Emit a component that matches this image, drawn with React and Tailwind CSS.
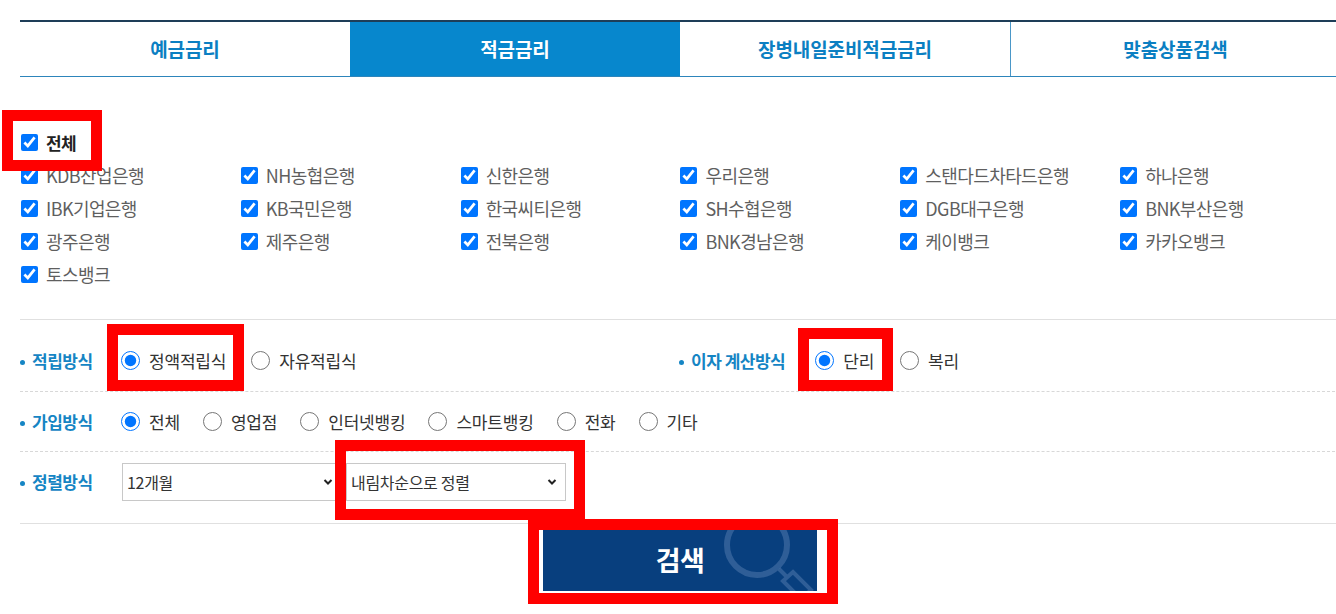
import React from "react";

const banks = [
    "KDB산업은행", "NH농협은행", "신한은행", "우리은행", "스탠다드차타드은행", "하나은행",
    "IBK기업은행", "KB국민은행", "한국씨티은행", "SH수협은행", "DGB대구은행", "BNK부산은행",
    "광주은행", "제주은행", "전북은행", "BNK경남은행", "케이뱅크", "카카오뱅크",
    "토스뱅크",
];

const tabs = ["예금금리", "적금금리", "장병내일준비적금금리", "맞춤상품검색"];

// red annotation frame drawn over the screenshot
function Mark({ className }) {
    return <span className={`pointer-events-none absolute z-10 border-[11px] border-[#ff0000] ${className}`} />;
}

function Label({ children, className = "" }) {
    return (
        <div className={`flex items-center text-[17px] font-bold tracking-[-0.5px] text-[#1585c4] ${className}`}>
            <span className="w-[5px] h-[5px] rounded-full bg-[#1585c4] mr-[7px] mt-[3px]" />
            {children}
        </div>
    );
}

function Radio({ name, label, checked, children }) {
    return (
        <label className="relative flex items-center h-[24px] gap-[9px] text-[17px] tracking-[-0.2px] text-[#333]">
            <input type="radio" name={name} defaultChecked={checked} className="m-0 w-[19px] h-[19px]" />
            {label}
            {children}
        </label>
    );
}

function Select({ value, children }) {
    return (
        <div className="relative w-[220px] h-[38px]">
            <select
                defaultValue={value}
                className="appearance-none w-full h-full border border-[#c8c8c8] bg-white pl-[4px] text-[16px] text-[#333] tracking-[-0.3px] outline-none"
            >
                <option>{value}</option>
            </select>
            <svg className="pointer-events-none absolute right-[9px] top-[15px]" width="10" height="8" viewBox="0 0 10 8">
                <path d="M1.5 2 L5 5.5 L8.5 2" fill="none" stroke="#222" strokeWidth="2" />
            </svg>
            {children}
        </div>
    );
}

export default function App() {
    return (
        <div className="w-full min-h-[614px] bg-white overflow-hidden pl-[20px] font-['Noto_Sans_CJK_KR','Noto_Sans',sans-serif]">
            <div className="w-[1320px]">
                {/* Tabs */}
                <div className="mt-[20px] grid grid-cols-4 h-[57px] border-t-2 border-t-[#1e3e58] border-b border-b-[#2d85bb]">
                    {tabs.map((t, i) => (
                        <div
                            key={t}
                            className={`flex items-center justify-center text-[19px] font-bold tracking-[-0.1px] ${
                                i === 1 ? "bg-[#0787cd] text-white" : "text-[#0b7fc2]"
                            } ${i === 3 ? "border-l border-l-[#4a97c8]" : ""}`}
                        >
                            {t}
                        </div>
                    ))}
                </div>

                {/* Bank checkboxes */}
                <div className="mt-[49px] pl-[1px]">
                    <div className="h-[33px] flex items-center">
                        <label className="relative flex items-center h-[33px] gap-[8px] text-[17px] font-bold tracking-[-0.6px] text-[#222]">
                            <input type="checkbox" defaultChecked className="m-0 w-[17px] h-[17px]" />
                            전체
                            <Mark className="-left-[19px] -right-[26px] -top-[16px] -bottom-[12px]" />
                        </label>
                    </div>
                    <div className="grid grid-cols-6">
                        {banks.map((b) => (
                            <label key={b} className="flex items-center h-[33px] gap-[8px] text-[18px] tracking-[-0.6px] text-[#5f5f5f]">
                                <input type="checkbox" defaultChecked className="m-0 w-[17px] h-[17px]" />
                                {b}
                            </label>
                        ))}
                    </div>
                </div>

                {/* Options */}
                <div className="mt-[28px] border-t border-[#e0e0e0]">
                    <div className="flex items-center h-[72px] pt-[10px] border-b border-dashed border-[#d8d8d8]">
                        <div className="flex items-center w-[659px]">
                            <Label className="w-[101px]">적립방식</Label>
                            <div className="flex items-center gap-[25px]">
                                <Radio name="save" label="정액적립식" checked>
                                    <Mark className="-left-[14px] -right-[18px] -top-[25px] -bottom-[18px]" />
                                </Radio>
                                <Radio name="save" label="자유적립식" />
                            </div>
                        </div>
                        <div className="flex items-center">
                            <Label className="mr-[30px]">이자 계산방식</Label>
                            <div className="flex items-center gap-[26px]">
                                <Radio name="interest" label="단리" checked>
                                    <Mark className="-left-[17px] -right-[19px] -top-[21px] -bottom-[18px]" />
                                </Radio>
                                <Radio name="interest" label="복리" />
                            </div>
                        </div>
                    </div>

                    <div className="flex items-center h-[60px] border-b border-dashed border-[#d8d8d8]">
                        <Label className="w-[101px]">가입방식</Label>
                        <div className="flex items-center gap-[23px]">
                            <Radio name="join" label="전체" checked />
                            <Radio name="join" label="영업점" />
                            <Radio name="join" label="인터넷뱅킹" />
                            <Radio name="join" label="스마트뱅킹" />
                            <Radio name="join" label="전화" />
                            <Radio name="join" label="기타" />
                        </div>
                    </div>

                    <div className="flex items-center h-[72px] pb-[11px] border-b border-[#e0e0e0]">
                        <Label className="w-[102px]">정렬방식</Label>
                        <div className="flex items-center gap-[4px]">
                            <Select value="12개월" />
                            <Select value="내림차순으로 정렬">
                                <Mark className="-left-[11px] -right-[19px] -top-[23px] -bottom-[19px]" />
                            </Select>
                        </div>
                    </div>
                </div>

                {/* Search button */}
                <div className="flex justify-center mt-[6px]">
                    <div className="relative">
                        <button className="relative overflow-hidden w-[274px] h-[61px] bg-[#083f7e] text-white text-[27px] font-bold tracking-[-0.5px] flex items-center justify-center">
                            <svg className="absolute left-0 top-0" width="274" height="61" viewBox="0 0 274 61">
                                <g fill="none" stroke="#5f86b5" strokeOpacity="0.45">
                                    <circle cx="214" cy="15" r="30" strokeWidth="6" />
                                    <path d="M236 39 L244 47 M240 51 L250 42 L268 60 L258 69 Z" strokeWidth="4" />
                                </g>
                            </svg>
                            <span className="relative">검색</span>
                        </button>
                        <Mark className="-left-[15px] -right-[21px] -top-[11px] -bottom-[13px]" />
                    </div>
                </div>
            </div>
        </div>
    );
}
